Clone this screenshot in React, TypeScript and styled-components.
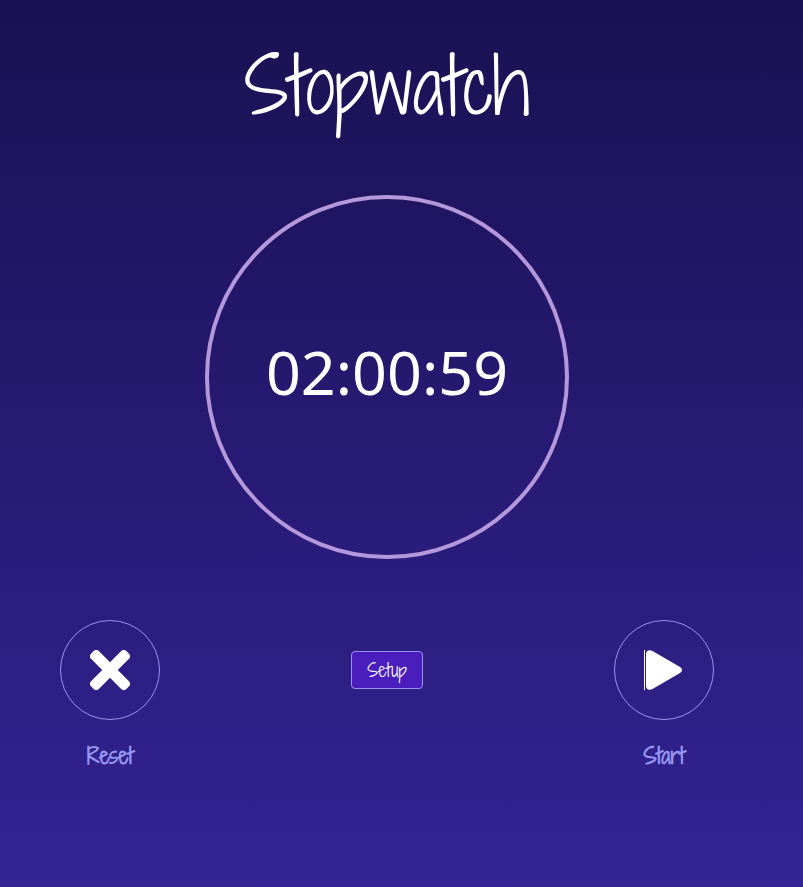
import React from "react";
import styled, { createGlobalStyle } from "styled-components";

const handwriting = `"Shadows Into Light Two", "Shadows Into Light", cursive`;

const GlobalStyle = createGlobalStyle`
  *, *::before, *::after { box-sizing: border-box; }
  body {
    margin: 0;
    min-height: 100vh;
    background: linear-gradient(#1a1152, #342394) no-repeat;
  }
`;

const Page = styled.main`
  display: flex;
  flex-direction: column;
  align-items: center;
  min-height: 100vh;
  padding: 36px 89px 40px 60px;
  color: #fff;
`;

const Title = styled.h1`
  margin: 0 0 60px;
  font: 400 75px/99px ${handwriting};
`;

const Dial = styled.div`
  display: grid;
  place-items: center;
  width: 364px;
  aspect-ratio: 1;
  padding-bottom: 10px;
  border: 4px solid #b597dc;
  border-radius: 50%;
`;

const Time = styled.time`
  font: 400 61px/84px "Segoe UI", "Noto Sans", sans-serif;
`;

const Controls = styled.div`
  display: flex;
  justify-content: space-between;
  align-items: flex-start;
  width: 100%;
  margin-top: 61px;
`;

const Control = styled.div`
  display: flex;
  flex-direction: column;
  align-items: center;
  gap: 20px;
  width: 100px;
`;

const RoundButton = styled.button`
  display: grid;
  place-items: center;
  width: 100px;
  height: 100px;
  padding: 0;
  color: #fff;
  background: transparent;
  border: 1px solid #9b91ec;
  border-radius: 50%;
  cursor: pointer;
`;

const Caption = styled.label`
  color: #9696f0;
  font: 700 22px/30px ${handwriting};
`;

const SetupButton = styled.button`
  width: 72px;
  height: 38px;
  margin-top: 31px;
  padding: 0;
  color: #fff;
  background: #491ebd;
  border: 1px solid #9b91ec;
  border-radius: 4px;
  font: 400 18px/24px ${handwriting};
  cursor: pointer;
`;

const CrossIcon = () => (
  <svg width="40" height="40" viewBox="-20 -20 40 40" fill="currentColor" aria-hidden="true">
    <rect x="-25" y="-5.500" width="50" height="11" rx="4" transform="rotate(45)" />
    <rect x="-25" y="-5.500" width="50" height="11" rx="4" transform="rotate(-45)" />
  </svg>
);

const PlayIcon = () => (
  <svg width="40" height="40" viewBox="0 0 40 40" fill="currentColor" aria-hidden="true">
    <path d="M0 0h1v40H0z" />
    <path d="M2 4C2 .5 5-.8 8.500 1L36 17c2.700 1.700 2.700 4.300 0 6L8.500 39C5 40.800 2 39.500 2 36Z" />
  </svg>
);

export default function App() {
  return (
    <>
      <GlobalStyle />
      <Page>
        <Title>Stopwatch</Title>
        <Dial>
          <Time>02:00:59</Time>
        </Dial>
        <Controls>
          <Control>
            <RoundButton id="reset" type="button"><CrossIcon /></RoundButton>
            <Caption htmlFor="reset">Reset</Caption>
          </Control>
          <SetupButton type="button">Setup</SetupButton>
          <Control>
            <RoundButton id="start" type="button"><PlayIcon /></RoundButton>
            <Caption htmlFor="start">Start</Caption>
          </Control>
        </Controls>
      </Page>
    </>
  );
}
